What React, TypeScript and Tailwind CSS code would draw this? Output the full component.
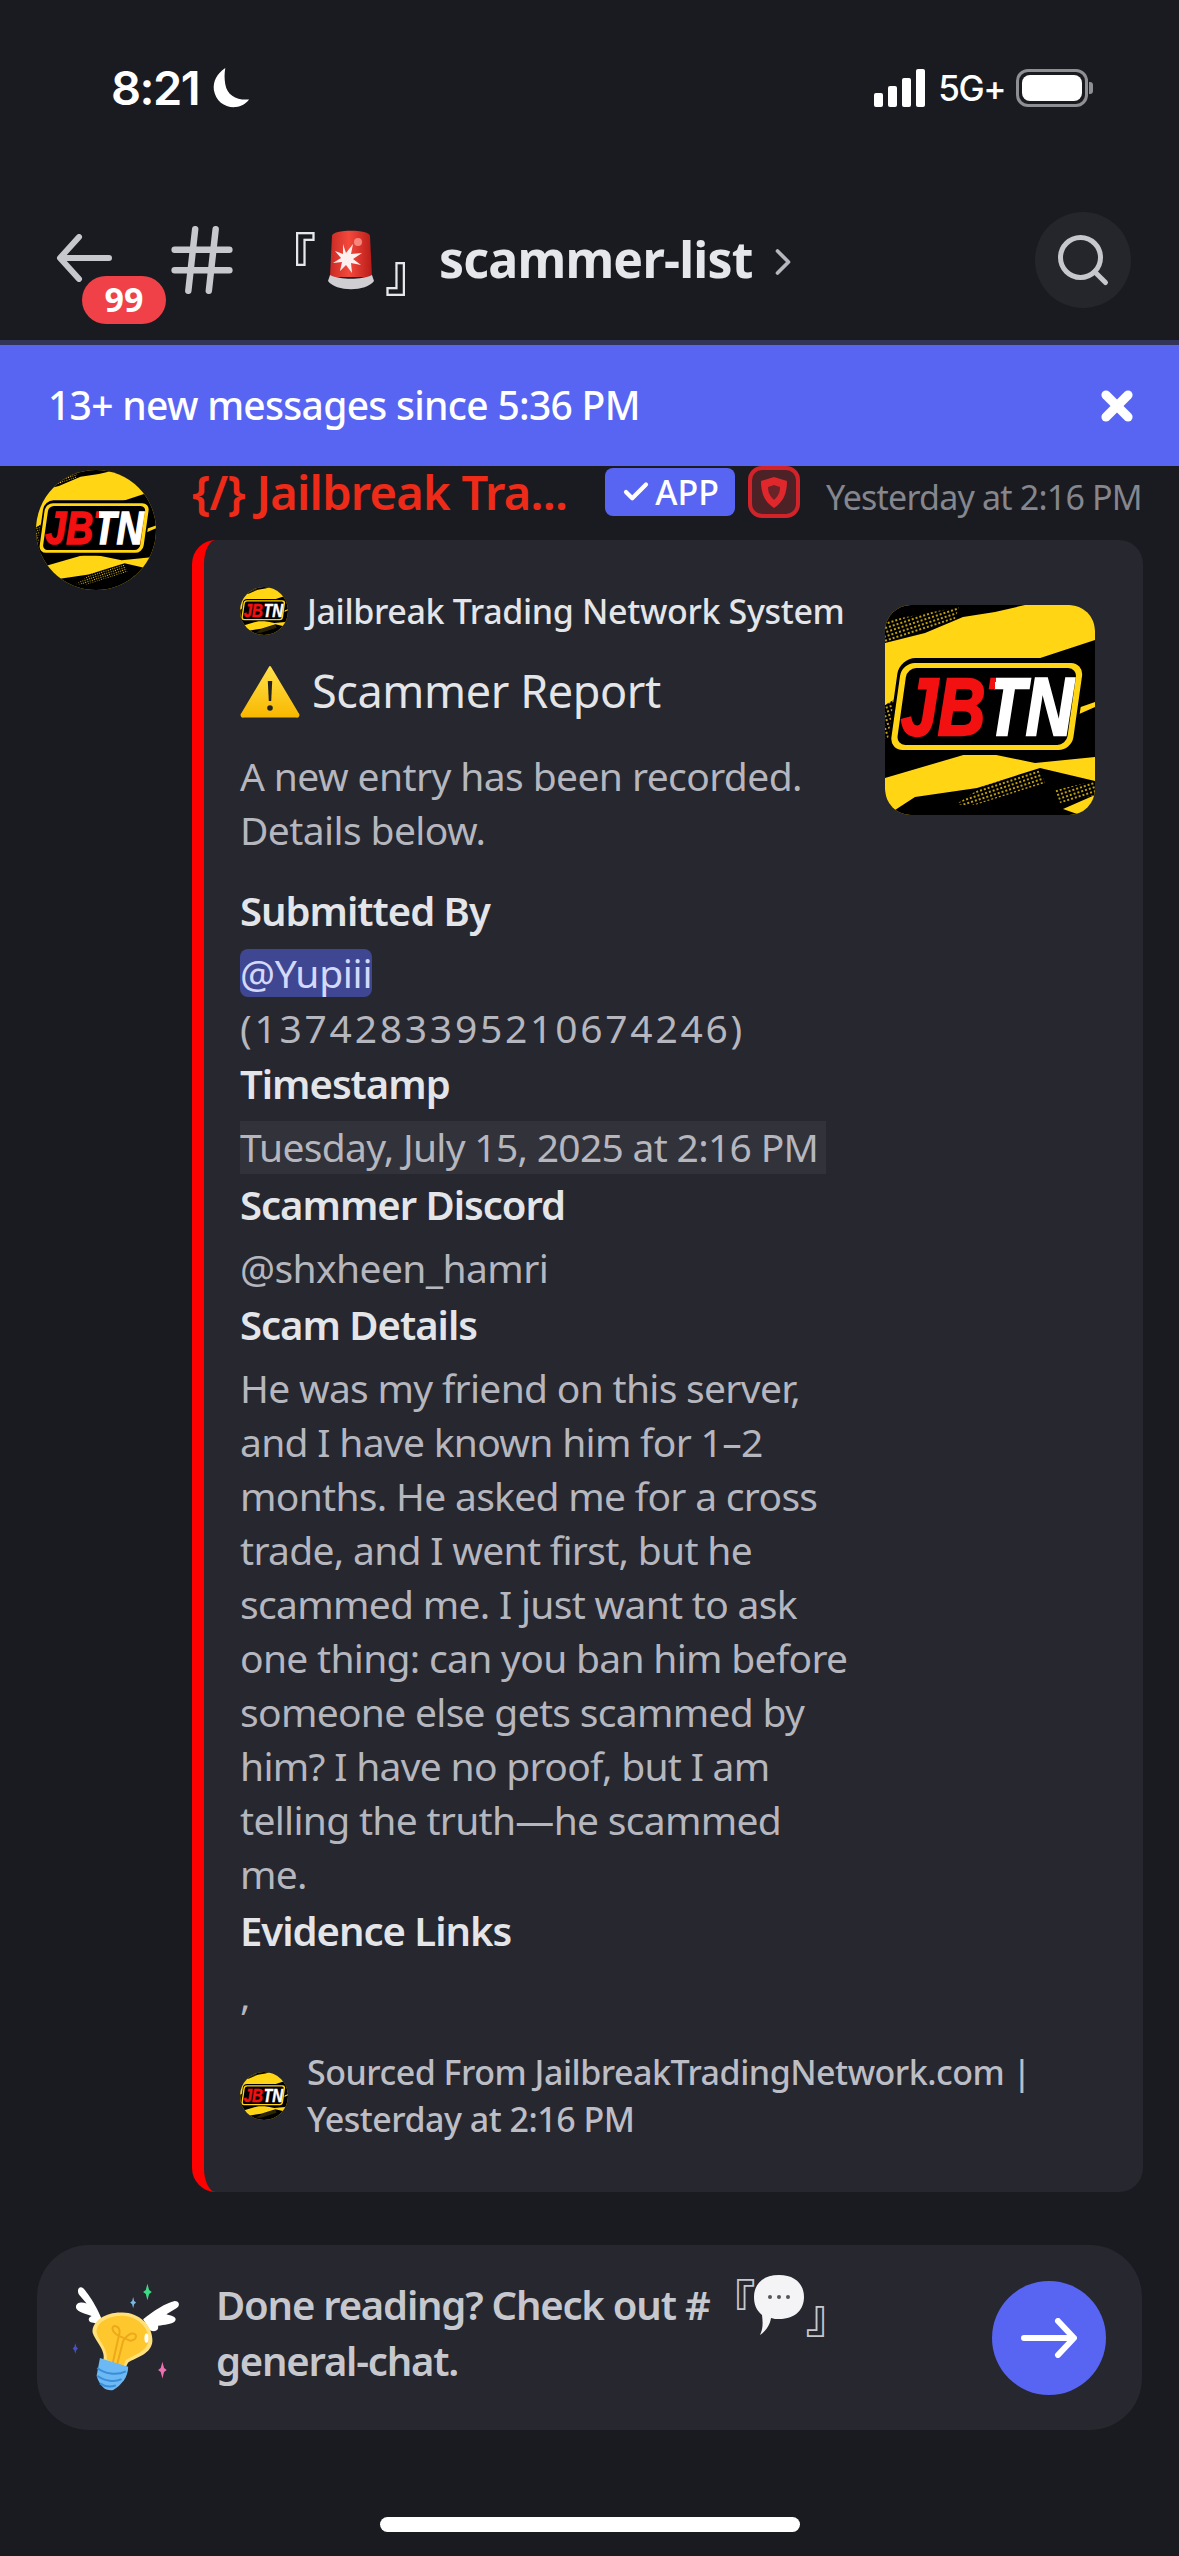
import { useId } from 'react';
import { Search, X, ChevronRight, Check, Hash } from 'lucide-react';

const sans = { fontFamily: '"Noto Sans", "Noto Sans CJK JP", sans-serif' };
const cjk = { fontFamily: '"Noto Sans CJK JP", sans-serif' };

// the JBTN server logo, square art, clipped round by the caller
function Logo({ size, round }: { size: number; round?: boolean }) {
    const id = useId();
    return (
        <svg width={size} height={size} viewBox="0 0 210 210" className="block shrink-0">
            <defs>
                <clipPath id={id}>
                    {round ? <circle cx="105" cy="105" r="105" /> : <rect width="210" height="210" rx="26" />}
                </clipPath>
                <pattern id={`${id}dots`} width="4" height="4" patternUnits="userSpaceOnUse" patternTransform="rotate(-18)">
                    <circle cx="2" cy="2" r="1" fill="#ffd514" />
                </pattern>
                {/* red JB, white TN, split along the italic slant */}
                <linearGradient id={`${id}ink`} gradientUnits="userSpaceOnUse" x1="36" y1="-12" x2="178" y2="12">
                    <stop offset="0.5" stopColor="#f21010" />
                    <stop offset="0.5" stopColor="#ffffff" />
                </linearGradient>
            </defs>
            <g clipPath={`url(#${id})`}>
                <rect width="210" height="210" fill="#ffd514" />
                <path d="M0 0H140L110 7 78 12 40 28 0 38Z" fill="#000" />
                <path d="M0 16 74 2 70 14 0 38Z" fill={`url(#${id}dots)`} />
                <path d="M0 100 L50 70 140 58 210 35V152L150 158 92 146 0 173Z" fill="#000" />
                <path d="M0 98 30 84V125L0 135Z" fill={`url(#${id}dots)`} />
                <path d="M10 205 30 192 92 183 155 163 210 176V190L178 204 195 210H10Z" fill="#000" />
                <path d="M70 200 100 180 155 165 160 178 90 200Z" fill={`url(#${id}dots)`} />
                <path d="M170 185 210 176V190L175 198Z" fill={`url(#${id}dots)`} />
                <path d="M190 104 210 97V102L192 110Z" fill="#ffd514" />
                <rect x="8" y="53" width="188" height="97" rx="16" fill="#000" transform="skewX(-8) translate(14 0)" />
                <rect x="11" y="58" width="182" height="87" rx="13" fill="#ffd514" transform="skewX(-8) translate(14 0)" />
                <rect x="17" y="63" width="170" height="77" rx="9" fill="#000" transform="skewX(-8) translate(14 0)" />
                <text transform="translate(16 130) scale(0.815 1)" fontFamily="Liberation Sans, sans-serif" fontWeight="700" fontStyle="italic" fontSize="81" strokeWidth="2.5" fill={`url(#${id}ink)`} stroke={`url(#${id}ink)`}>JBTN</text>
            </g>
        </svg>
    );
}

function Siren() {
    return (
        <svg width="46" height="62" viewBox="0 0 46 62" className="block shrink-0">
            <defs>
                <linearGradient id="sirenBody" x1="0" x2="1" y1="0" y2="0">
                    <stop offset="0" stopColor="#c92a24" />
                    <stop offset="0.45" stopColor="#f4493c" />
                    <stop offset="1" stopColor="#b81c18" />
                </linearGradient>
            </defs>
            <path d="M4 7C4 0 42 0 42 7L44 48H2Z" fill="url(#sirenBody)" />
            <path d="M15 15l3 9 7-9-2 10 11-1-9 6 8 6-10-2 1 10-6-8-6 6 2-9-9 1 8-5-6-7 8 3Z" fill="#fff" opacity="0.92" />
            <circle cx="30" cy="13" r="4" fill="#ff9a90" opacity="0.8" />
            <path d="M2 46C12 51 34 51 44 46L46 52C38 63 8 63 0 52Z" fill="#cfcfd3" />
        </svg>
    );
}

function Warning() {
    return (
        <svg width="60" height="54" viewBox="0 0 60 54" className="block shrink-0">
            <defs>
                <linearGradient id="warnFill" x1="0" x2="0" y1="0" y2="1">
                    <stop offset="0" stopColor="#ffe14a" />
                    <stop offset="1" stopColor="#f9b800" />
                </linearGradient>
            </defs>
            <path d="M30 3 58 50a1.6 1.6 0 0 1-1.6 2.6H3.6A1.6 1.6 0 0 1 2 50Z" fill="url(#warnFill)" stroke="url(#warnFill)" strokeWidth="2" strokeLinejoin="round" />
            <path d="M27.8 17h4.4l-1 20h-2.4Z" fill="#222" />
            <circle cx="30" cy="44" r="2.8" fill="#222" />
        </svg>
    );
}

function SpeechBubble() {
    return (
        <svg width="54" height="64" viewBox="0 0 54 64" className="block shrink-0">
            <path d="M27 2C44 2 52 12 52 24S44 46 27 46c-3 0-5 0-8-1-1 7-5 13-11 17 3-6 3-12 2-20C4 37 2 31 2 24 2 12 10 2 27 2Z" fill="#f4f4f6" />
            <circle cx="18" cy="24" r="2" fill="#55565c" />
            <circle cx="27" cy="24" r="2" fill="#55565c" />
            <circle cx="36" cy="24" r="2" fill="#55565c" />
        </svg>
    );
}

function WingedBulb() {
    return (
        <svg width="113" height="113" viewBox="60 60 340 340" className="block shrink-0">
            <path d="M165 210C160 170 125 110 100 82 88 72 78 88 88 102L110 128C95 122 78 125 78 138 78 150 95 155 125 165 115 170 112 180 125 185 140 188 150 190 165 210Z" fill="#fff" />
            <path d="M280 175C310 150 350 125 375 120 390 120 392 135 380 142L350 160C370 165 385 170 375 182 365 190 345 192 325 195 328 210 315 215 300 208Z" fill="#fff" />
            <path d="M210 155C260 150 310 190 308 240 306 280 260 290 235 305L225 325 160 300C170 270 135 240 128 215 125 180 170 155 210 155Z" fill="#ffe07a" />
            <path d="M210 165C255 162 298 195 296 238 294 272 252 282 228 298L220 318 170 296C176 268 146 240 140 215 137 186 174 165 210 165Z" fill="#ffc72e" />
            <ellipse cx="290" cy="232" rx="6" ry="14" fill="#fff" />
            <path d="M188 310 207 225C180 210 185 190 200 197 212 202 210 218 207 225L242 240C265 235 262 215 245 218 232 222 226 232 220 240L200 318" fill="none" stroke="#eda91a" strokeWidth="6" strokeLinejoin="round" />
            <path d="M150 292 235 318C235 350 215 372 190 388 170 392 150 380 140 345Z" fill="#6cb9f5" />
            <path d="M142 322C165 340 200 345 228 332M142 345C165 362 195 365 215 355M150 368C165 378 182 380 198 374" fill="none" stroke="#3a8ed8" strokeWidth="6" />
            <path d="M293 68l5 19 8 6-8 6-5 19-5-19-8-6 8-6Z" fill="#3ddc84" />
            <path d="M250 108l3 12 6 5-6 5-3 12-3-12-6-5 6-5Z" fill="#74b8ea" />
            <path d="M76 247l3 11 5 5-5 5-3 11-3-11-5-5 5-5Z" fill="#4650c8" />
            <path d="M338 303l5 19 8 6-8 6-5 19-5-19-8-6 8-6Z" fill="#ee6fb2" />
        </svg>
    );
}

function FieldLabel({ children }: { children: string }) {
    return <div className="h-[54px] text-[40px] leading-[54px] font-semibold text-[#e4e5e9] whitespace-nowrap tracking-[-1px]">{children}</div>;
}

const details = [
    'He was my friend on this server,',
    'and I have known him for 1–2',
    'months. He asked me for a cross',
    'trade, and I went first, but he',
    'scammed me. I just want to ask',
    'one thing: can you ban him before',
    'someone else gets scammed by',
    'him? I have no proof, but I am',
    'telling the truth—he scammed',
    'me.',
];

export default function App() {
    return (
        <div className="w-[1179px] h-[2556px] overflow-hidden bg-[#1a1b20] flex flex-col text-[#b5b6be]" style={sans}>
            {/* Status bar */}
            <div className="h-[179px] shrink-0 pl-[111px] pr-[86px] pt-[64px] flex justify-between items-start text-white">
                <div className="flex items-center h-[48px] gap-[13px]">
                    <span className="text-[47px] font-semibold tracking-[-1.5px]" style={{ fontFamily: 'Inter, sans-serif' }}>8:21</span>
                    <svg width="38" height="40" viewBox="0 0 38 42"><path d="M13 0C4 6 0 14 1 23c2 12 12 19 23 18 6-1 10-3 14-8-13 1-23-4-25-16-1-6-1-11 0-17Z" fill="#fff" /></svg>
                </div>
                <div className="flex items-center h-[48px] gap-[13px]">
                    <div className="flex items-end gap-[5px] h-[38px]">
                        <div className="w-[9px] h-[14px] rounded-[2px] bg-white" />
                        <div className="w-[9px] h-[21px] rounded-[2px] bg-white" />
                        <div className="w-[9px] h-[29px] rounded-[2px] bg-white" />
                        <div className="w-[9px] h-[38px] rounded-[2px] bg-white" />
                    </div>
                    <span className="text-[35px] font-medium tracking-[-1.5px]" style={{ fontFamily: 'Inter, sans-serif' }}>5G+</span>
                    <div className="flex items-center -ml-[2px]">
                        <div className="w-[72px] h-[38px] rounded-[12px] border-[3px] border-[#8e8f93] p-[3px]">
                            <div className="w-full h-full rounded-[8px] bg-white" />
                        </div>
                        <div className="w-[4px] h-[12px] rounded-r-[3px] bg-[#8e8f93] ml-[1px]" />
                    </div>
                </div>
            </div>

            {/* Channel header */}
            <div className="h-[161px] shrink-0 flex items-center pl-[56px] pr-[48px]">
                <div className="relative w-[114px] h-[60px] shrink-0">
                    <svg width="56" height="48" viewBox="0 0 56 48" className="mt-[4px] text-[#c7c8ce]">
                        <path d="M23 3 4 24l19 21M5 24h48" fill="none" stroke="currentColor" strokeWidth="6" strokeLinecap="round" strokeLinejoin="round" />
                    </svg>
                    <div className="absolute left-[26px] top-[46px] w-[84px] h-[48px] rounded-full bg-[#ef4147] flex items-center justify-center text-white text-[34px] font-bold">99</div>
                </div>
                <Hash size={82} strokeWidth={1.9} className="text-[#c7c8ce] shrink-0 -ml-[9px]" />
                <div className="flex items-center ml-[23px]">
                    <span className="text-[50px] leading-none w-[50px] font-semibold text-[#e6e7ea] -mt-[14px]" style={cjk}>『</span>
                    <div className="ml-[12px]"><Siren /></div>
                    <span className="text-[50px] leading-none w-[50px] font-semibold text-[#e6e7ea] mt-[18px] ml-[11px]" style={cjk}>』</span>
                    <span className="ml-[4px] text-[50px] font-bold text-[#e6e7ea] tracking-[-0.8px] whitespace-nowrap">scammer-list</span>
                    <ChevronRight size={44} strokeWidth={2} className="text-[#b5b6be] ml-[8px] mt-[4px]" />
                </div>
                <div className="ml-auto w-[96px] h-[96px] rounded-full bg-[#25262c] flex items-center justify-center">
                    <Search size={60} strokeWidth={2} className="text-[#c7c8ce]" />
                </div>
            </div>

            {/* New messages bar */}
            <div className="h-[126px] shrink-0 bg-[#5865f2] border-t-[5px] border-[#32345a] flex items-center justify-between pl-[48px] pr-[40px] text-white">
                <span className="text-[39px] font-medium tracking-[-0.7px]">13+ new messages since 5:36 PM</span>
                <X size={44} strokeWidth={5} />
            </div>

            {/* Message */}
            <div className="flex pl-[36px] pr-[36px] pt-[4px] gap-[36px] min-h-0">
                <div className="shrink-0"><Logo size={120} round /></div>
                <div className="flex-1 min-w-0">
                    <div className="h-[70px] flex items-start whitespace-nowrap -mt-[4px]">
                        <span className="h-[52px] leading-[52px] w-[375px] shrink-0 text-[47px] font-semibold text-[#ee2b19] tracking-[-0.75px]">{'{/} Jailbreak Tra...'}</span>
                        <div className="ml-[38px] mt-[2px] h-[48px] w-[130px] rounded-[8px] bg-[#5865f2] flex items-center justify-center gap-[4px] text-white text-[34px] font-medium">
                            <Check size={30} strokeWidth={3.4} />APP
                        </div>
                        <svg width="52" height="52" viewBox="0 0 52 52" className="ml-[13px] shrink-0">
                            <rect x="2" y="2" width="48" height="48" rx="12" fill="#4c2226" stroke="#d3232a" strokeWidth="4" />
                            <path d="M26 11 39 15c0 13-4 21-13 27-9-6-13-14-13-27Z" fill="#e0282c" />
                            <path d="M26 19 32 21c0 6-2 9-6 13-4-4-6-7-6-13Z" fill="#6a2428" />
                        </svg>
                        <span className="ml-[26px] mt-[9px] text-[34px] leading-[44px] text-[#85868e] tracking-[-0.8px]">Yesterday at 2:16 PM</span>
                    </div>

                    {/* Embed */}
                    <div className="mt-[4px] h-[1652px] rounded-[24px] bg-[#26272f] border-l-[12px] border-[#fe0000] pl-[36px] pr-[48px] pt-[46px] relative">
                        <div className="absolute right-[48px] top-[65px] rounded-[24px] overflow-hidden"><Logo size={210} /></div>

                        <div className="h-[50px] flex items-center gap-[19px]">
                            <Logo size={48} round />
                            <span className="text-[34px] font-medium text-[#e4e5e9] tracking-[-0.35px] whitespace-nowrap">Jailbreak Trading Network System</span>
                        </div>
                        <div className="mt-[26px] h-[58px] flex items-center gap-[12px]">
                            <Warning />
                            <span className="text-[45px] text-[#e4e5e9] tracking-[-0.4px]">Scammer Report</span>
                        </div>
                        <div className="mt-[29px] text-[39px] leading-[54px] tracking-[-0.6px]">
                            <div>A new entry has been recorded.</div>
                            <div>Details below.</div>
                        </div>
                        <div className="mt-[27px]"><FieldLabel>Submitted By</FieldLabel></div>
                        <div className="mt-[8px] h-[54px] flex items-center text-[39px] text-[#d4d8fa] tracking-[-0.3px]">
                            <span className="bg-[#3f4792] rounded-[8px] leading-[48px]">@Yupiii</span>
                        </div>
                        <div className="h-[56px] leading-[56px] text-[39px] tracking-[2.75px]">(1374283395210674246)</div>
                        <div className="mt-[1px]"><FieldLabel>Timestamp</FieldLabel></div>
                        <div className="mt-[10px] h-[53px] w-[586px] bg-[#31323a] flex items-center text-[39px] tracking-[-0.7px] whitespace-nowrap">Tuesday, July 15, 2025 at 2:16 PM</div>
                        <div className="mt-[4px]"><FieldLabel>Scammer Discord</FieldLabel></div>
                        <div className="mt-[9px] h-[54px] leading-[54px] text-[39px] tracking-[-0.6px]">@shxheen_hamri</div>
                        <div className="mt-[3px]"><FieldLabel>Scam Details</FieldLabel></div>
                        <div className="mt-[9px] text-[39px] leading-[54px] tracking-[-0.7px] whitespace-nowrap">
                            {details.map((line) => (
                                <div key={line}>{line}</div>
                            ))}
                        </div>
                        <div className="mt-[3px]"><FieldLabel>Evidence Links</FieldLabel></div>
                        <div className="mt-[10px] h-[54px] leading-[54px] text-[39px]">,</div>
                        <div className="mt-[27px] flex items-center gap-[19px]">
                            <Logo size={48} round />
                            <div className="text-[34px] leading-[47px] font-medium tracking-[-0.5px] text-[#bcbdc5] whitespace-nowrap">
                                <div>Sourced From JailbreakTradingNetwork.com |</div>
                                <div>Yesterday at 2:16 PM</div>
                            </div>
                        </div>
                    </div>
                </div>
            </div>

            {/* Read prompt */}
            <div className="mt-[53px] mx-[37px] h-[185px] rounded-[52px] bg-[#26272f] flex items-center pl-[33px] pr-[36px]">
                <WingedBulb />
                <div className="ml-[33px] -mt-[9px] text-[40px] leading-[56px] font-semibold text-[#c7c8ce] tracking-[-1.2px]">
                    <div className="flex items-center h-[56px] whitespace-nowrap">
                        Done reading? Check out #
                        <span className="text-[46px] leading-none w-[46px] -mt-[14px] font-medium" style={cjk}>『</span>
                        <div className="-ml-[4px]"><SpeechBubble /></div>
                        <span className="text-[46px] leading-none w-[46px] mt-[14px] font-medium" style={cjk}>』</span>
                    </div>
                    <div>general-chat.</div>
                </div>
                <div className="ml-auto w-[114px] h-[114px] rounded-full bg-[#5865f2] flex items-center justify-center text-white">
                    <svg width="56" height="40" viewBox="0 0 56 40">
                        <path d="M37 3 53 20 37 37M3 20h48" fill="none" stroke="currentColor" strokeWidth="6" strokeLinecap="round" strokeLinejoin="round" />
                    </svg>
                </div>
            </div>

            {/* Home indicator */}
            <div className="mt-[87px] mx-auto w-[420px] h-[15px] rounded-full bg-white" />
        </div>
    );
}
